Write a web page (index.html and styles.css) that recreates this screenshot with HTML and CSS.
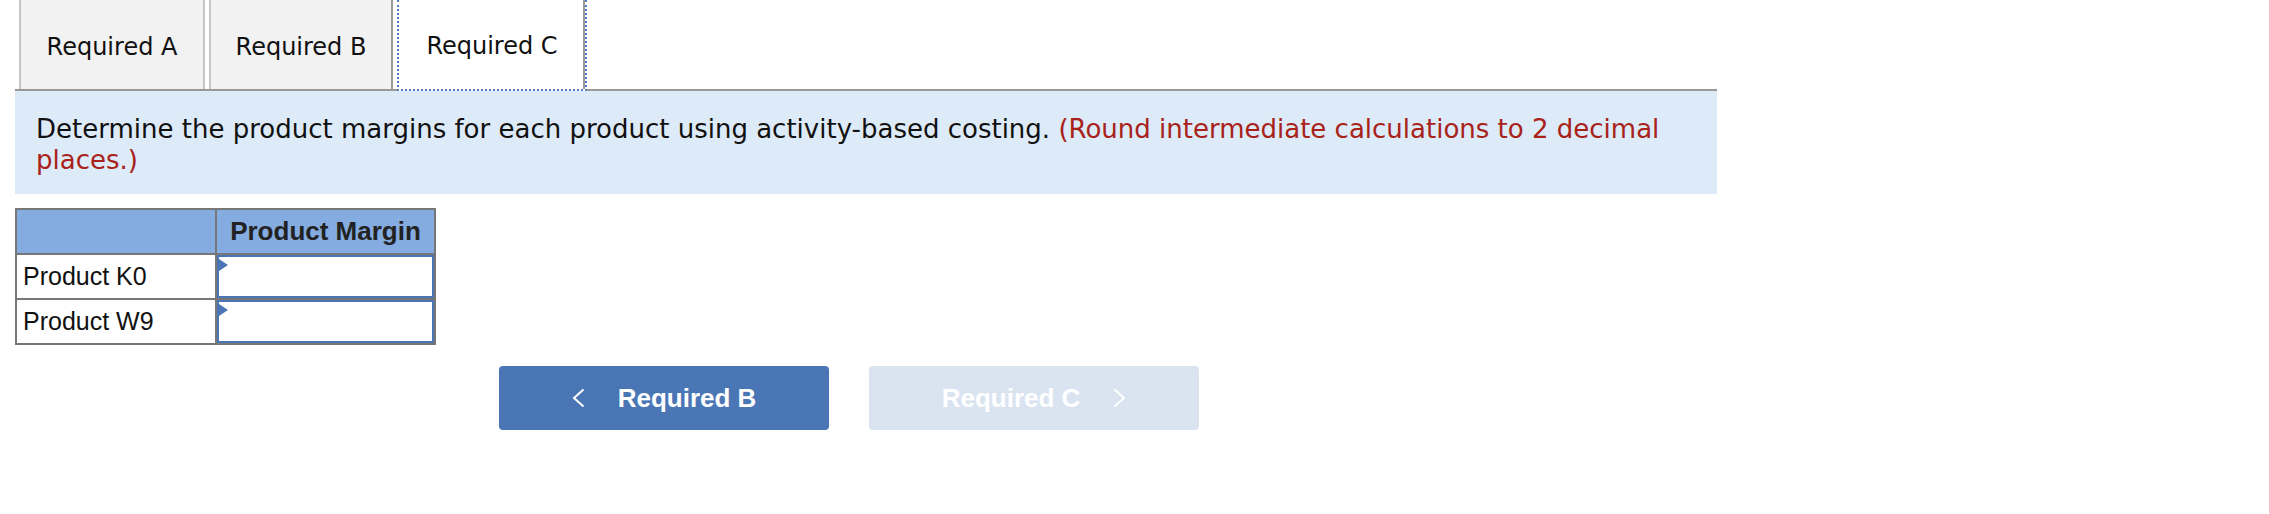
FILE: index.html
```html
<!DOCTYPE html>
<html lang="en">
<head>
<meta charset="UTF-8" />
<title>Required C</title>
<link rel="stylesheet" href="styles.css">
</head>
<body>
<div class="page">

  <!-- Tabs -->
  <div class="tabs" role="tablist">
    <div class="tab" role="tab">Required A</div>
    <div class="tab tab-prev" role="tab">Required B</div>
    <div class="tab active" role="tab">Required C</div>
  </div>

  <!-- Instructions -->
  <div class="instructions">
    Determine the product margins for each product using activity-based costing.
    <span class="note">(Round intermediate calculations to 2 decimal</span><br>
    <span class="note">places.)</span>
  </div>

  <!-- Answer table -->
  <table class="answer-table">
    <tr>
      <th class="label-col"></th>
      <th class="value-col">Product Margin</th>
    </tr>
    <tr>
      <td class="label-col">Product K0</td>
      <td class="value-col"><div class="answer-input"><span class="marker"></span></div></td>
    </tr>
    <tr>
      <td class="label-col">Product W9</td>
      <td class="value-col"><div class="answer-input"><span class="marker"></span></div></td>
    </tr>
  </table>

  <!-- Navigation -->
  <div class="nav-buttons">
    <button class="nav-btn prev">
      <svg width="13" height="20" viewBox="0 0 13 20"><polyline points="11.5,1.5 2,10 11.5,18.5" fill="none" stroke="#fff" stroke-width="2"/></svg>
      <span>Required B</span>
    </button>
    <button class="nav-btn next" disabled>
      <span>Required C</span>
      <svg width="13" height="20" viewBox="0 0 13 20"><polyline points="1.5,1.5 11,10 1.5,18.5" fill="none" stroke="#fff" stroke-width="2"/></svg>
    </button>
  </div>

</div>
</body>
</html>
```

FILE: styles.css
```css
* {
  box-sizing: border-box;
}
body {
  margin: 0;
  background: #fff;
  font-family: "DejaVu Sans", Verdana, sans-serif;
  color: #111;
}
.page {
  width: 1702px;
  margin-left: 15px;
}

/* Tabs */
.tabs {
  display: flex;
  align-items: flex-start;
  gap: 4px;
  height: 91px;
  padding-left: 4px;
  border-bottom: 2px solid #999;
}
.tab {
  display: flex;
  align-items: center;
  justify-content: center;
  width: 186px;
  height: 89px;
  padding-top: 4px;
  background: #f2f2f2;
  border-left: 2px solid #c6c6c6;
  border-right: 2px solid #c6c6c6;
  font-size: 24px;
  line-height: 28px;
}
.tab-prev {
  width: 184px;
  border-right-color: #999;
}
.tab.active {
  width: 190px;
  height: 91px;
  padding-bottom: 2px;
  background: #fff;
  border: 2px dotted #4f7fc4;
  border-top: none;
  box-shadow: inset -2px 0 0 #9a9a9a;
}

/* Instructions */
.instructions {
  background: #ddeaf7;
  padding: 23px 8px 18px 21px;
  font-size: 26px;
  line-height: 31px;
  color: #111;
}
.note {
  color: #a8221a;
}

/* Answer table */
.answer-table {
  margin-top: 14px;
  border-collapse: collapse;
  border: 2px solid #777;
  font-family: "Liberation Sans", Arial, sans-serif;
}
.answer-table th,
.answer-table td {
  border: 2px solid #777;
  padding: 0;
}
.answer-table th {
  height: 45px;
  background: #84ace0;
  font-size: 26px;
  font-weight: 700;
  color: #222;
}
.answer-table td {
  height: 45px;
  font-size: 25px;
  color: #111;
}
.label-col {
  width: 200px;
}
td.label-col {
  padding-left: 6px;
}
.value-col {
  width: 219px;
}
td.value-col {
  padding: 0;
}
.answer-input {
  position: relative;
  height: 43px;
  border: 2px solid #4a76b5;
  background: #fff;
}
.marker {
  position: absolute;
  left: 0;
  top: 2px;
  width: 0;
  height: 0;
  border-top: 6px solid transparent;
  border-bottom: 6px solid transparent;
  border-left: 9px solid #4a76b5;
}

/* Navigation buttons */
.nav-buttons {
  display: flex;
  gap: 40px;
  margin-top: 21px;
  margin-left: 484px;
}
.nav-btn {
  display: flex;
  align-items: center;
  justify-content: center;
  gap: 33px;
  width: 330px;
  height: 64px;
  border: none;
  border-radius: 4px;
  font-family: "Liberation Sans", Arial, sans-serif;
  font-size: 26px;
  font-weight: 700;
  color: #fff;
  cursor: pointer;
}
.nav-btn.prev {
  background: #4a76b5;
}
.nav-btn.next {
  background: #dae4f1;
  cursor: default;
}
```
